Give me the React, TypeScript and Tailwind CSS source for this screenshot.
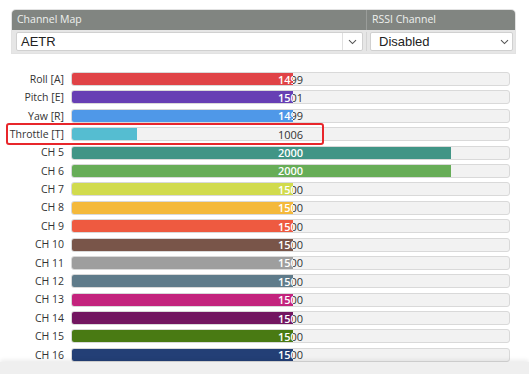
const channels = [
  { name: 'Roll [A]', value: 1499, color: '#e04347' },
  { name: 'Pitch [E]', value: 1501, color: '#673fb4' },
  { name: 'Yaw [R]', value: 1499, color: '#4f98e8' },
  { name: 'Throttle [T]', value: 1006, color: '#55bdd1' },
  { name: 'CH 5', value: 2000, color: '#419586' },
  { name: 'CH 6', value: 2000, color: '#67ad57' },
  { name: 'CH 7', value: 1500, color: '#d1db4d' },
  { name: 'CH 8', value: 1500, color: '#f4b93b' },
  { name: 'CH 9', value: 1500, color: '#ee5a40' },
  { name: 'CH 10', value: 1500, color: '#795549' },
  { name: 'CH 11', value: 1500, color: '#9e9e9e' },
  { name: 'CH 12', value: 1500, color: '#5f7b8a' },
  { name: 'CH 13', value: 1500, color: '#c3237d' },
  { name: 'CH 14', value: 1500, color: '#721560' },
  { name: 'CH 15', value: 1500, color: '#497a13' },
  { name: 'CH 16', value: 1500, color: '#233f76' },
];

const MIN = 800;
const MAX = 2185;

function Chevron() {
  return (
    <svg width="9" height="6" viewBox="0 0 9 6" fill="none">
      <path d="M1 1.2 4.5 4.6 8 1.2" stroke="#555" strokeWidth="1.1" />
    </svg>
  );
}

function Meter({ value, color }: { value: number; color: string }) {
  const pct = ((value - MIN) / (MAX - MIN)) * 100;
  return (
    <div className="relative w-[439px] h-[14px] rounded-[3px] border border-[#d9d9d9] bg-[#f2f2f2] overflow-hidden">
      <div className="absolute inset-0 flex items-center justify-center text-[11px] leading-none text-[#333]">{value}</div>
      <div className="absolute left-0 top-0 bottom-0 overflow-hidden" style={{ width: `${pct}%`, backgroundColor: color }}>
        <div className="w-[437px] h-full flex items-center justify-center text-[11px] leading-none text-white font-semibold">{value}</div>
      </div>
    </div>
  );
}

export default function App() {
  return (
    <div className="relative w-[529px] h-[374px] overflow-hidden bg-white font-['Open_Sans',sans-serif]">
      <div className="ml-[12px] mt-[10px] w-[503px] rounded-t-[4px] bg-[#e6e6e6] pb-[2px] shadow-[0_0_0_1px_#e2e2e2]">
        <div className="grid grid-cols-[355px_148px] h-[20px] rounded-t-[4px] bg-[#818581] text-[10.5px] text-[#eef0ee]">
          <div className="flex items-center pl-[5px] border-r border-[#9a9d9a]">Channel Map</div>
          <div className="flex items-center pl-[5px]">RSSI Channel</div>
        </div>
        <div className="grid grid-cols-[355px_148px] pt-[2px] font-['Liberation_Sans',sans-serif] text-[13px] text-[#222]">
          <div className="pl-[4px] pr-[3px] border-r border-[#d4d4d4]">
            <div className="flex h-[19px] rounded-[2px] border border-[#d0d0d0] bg-white">
              <div className="flex-1 flex items-center pl-[4px]">AETR</div>
              <div className="w-[20px] flex items-center justify-center border-l border-[#e0e0e0]"><Chevron /></div>
            </div>
          </div>
          <div className="pl-[3px] pr-[2px]">
            <div className="flex h-[19px] rounded-[2px] border border-[#d0d0d0] bg-white">
              <div className="flex-1 flex items-center pl-[8px]">Disabled</div>
              <div className="w-[16px] flex items-center justify-center"><Chevron /></div>
            </div>
          </div>
        </div>
      </div>

      <div className="mt-[19px] flex flex-col gap-[4.4px]">
        {channels.map((c) => (
          <div key={c.name} className="flex items-center h-[14px]">
            <div className="w-[64px] text-right text-[10.5px] text-[#333] leading-none">{c.name}</div>
            <div className="ml-[7px]">
              <Meter value={c.value} color={c.color} />
            </div>
          </div>
        ))}
      </div>

      <div className="absolute left-[6px] top-[123px] w-[318px] h-[22px] rounded-[3px] border-2 border-[#e8262b]" />
      <div className="absolute left-0 right-0 bottom-0 h-[12px] bg-[#efefef] shadow-[0_-2px_4px_rgba(0,0,0,0.08)]" />
    </div>
  );
}
